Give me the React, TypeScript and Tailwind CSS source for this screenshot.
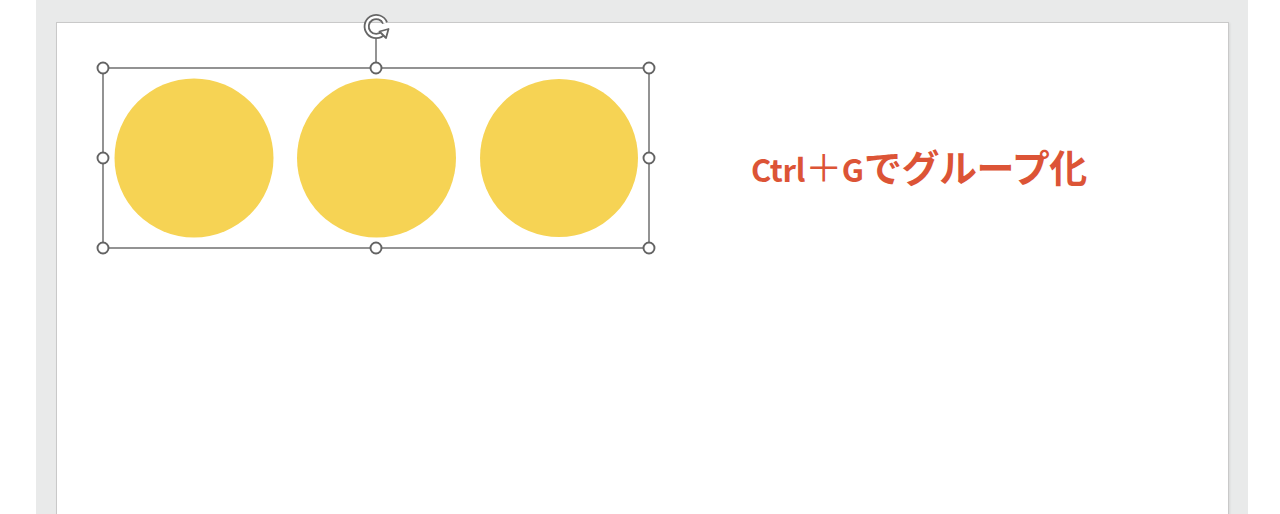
import React from "react";

export default function App() {
  const handles: [number, number][] = [
    [103, 68], [376, 68], [649, 68],
    [103, 158], [649, 158],
    [103, 248], [376, 248], [649, 248],
  ];
  const ox = 57, oy = 23;
  return (
    <div className="w-[1280px] h-[514px] bg-white flex overflow-hidden">
      <div className="w-[36px] shrink-0 bg-white" />
      <div className="w-[1212px] shrink-0 bg-[#e9eaea] pl-[20px] pt-[22px]">
        <div className="relative w-[1173px] h-[520px] bg-white border border-[#c9c9c9] shadow-[1px_1px_2px_rgba(0,0,0,0.08)]">
          <svg className="absolute left-0 top-0" width="1171" height="500" viewBox={`${ox} ${oy} 1171 500`} overflow="visible">
            <circle cx="194" cy="158" r="79.5" fill="#f6d354" />
            <circle cx="376.5" cy="158" r="79.5" fill="#f6d354" />
            <circle cx="559" cy="158" r="79" fill="#f6d354" />
            <rect x="103" y="68" width="546" height="180" fill="none" stroke="#787878" strokeWidth="1.6" />
            <line x1="376" y1="38" x2="376" y2="68" stroke="#787878" strokeWidth="1.6" />
            {handles.map(([x, y], i) => (
              <circle key={i} cx={x} cy={y} r="5.5" fill="#fff" stroke="#636363" strokeWidth="1.9" />
            ))}
          </svg>
          <div className="absolute left-[694px] top-[123px] whitespace-nowrap font-bold text-[#dc5436] leading-[40px] flex items-baseline" style={{ fontFamily: '"Noto Sans CJK JP", "Noto Sans", sans-serif' }}>
            <span className="text-[31px] tracking-[-0.3px]">Ctrl</span>
            <span className="text-[37px] font-normal tracking-[-0.5px]">＋</span>
            <span className="text-[31px]">G</span>
            <span className="text-[38px] tracking-[-0.5px]">でグループ化</span>
          </div>
        </div>
      </div>
      <div className="flex-1 bg-white" />
      <svg className="absolute left-[362px] top-[12px]" width="30" height="30" viewBox="0 0 30 30">
        <path d="M21.5 20.5 A9.5 9.5 0 1 1 23 11" fill="none" stroke="#666" strokeWidth="6" strokeLinecap="butt" />
        <path d="M21.5 20.5 A9.5 9.5 0 1 1 23 11" fill="none" stroke="#fff" strokeWidth="2.4" />
        <path d="M17.5 19.5 L26.5 17 L24 26 Z" fill="#fff" stroke="#666" strokeWidth="1.8" strokeLinejoin="round" />
      </svg>
    </div>
  );
}
